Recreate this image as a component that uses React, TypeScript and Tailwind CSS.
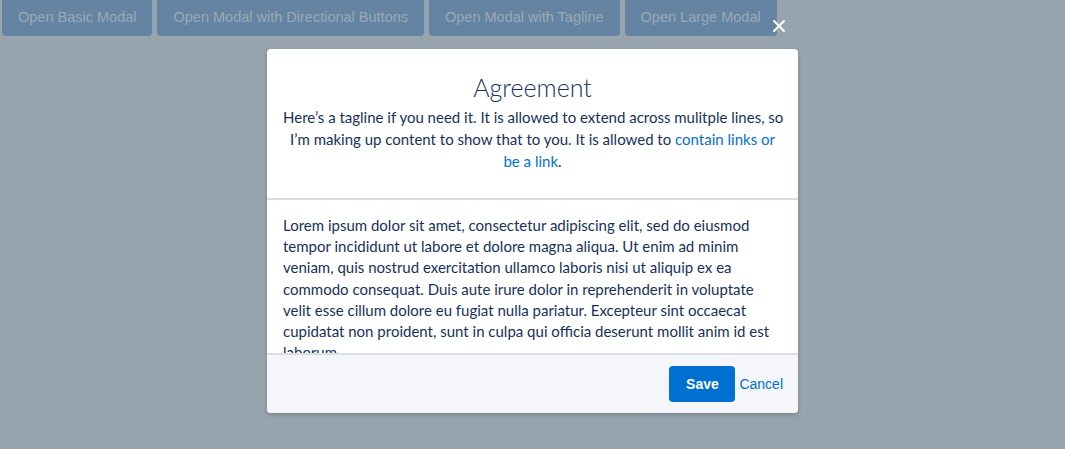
import React from 'react'

const topButtons = [
  'Open Basic Modal',
  'Open Modal with Directional Buttons',
  'Open Modal with Tagline',
  'Open Large Modal',
]

// line breaks as they fall in the design
const bodyLines = [
  'Lorem ipsum dolor sit amet, consectetur adipiscing elit, sed do eiusmod',
  'tempor incididunt ut labore et dolore magna aliqua. Ut enim ad minim',
  'veniam, quis nostrud exercitation ullamco laboris nisi ut aliquip ex ea',
  'commodo consequat. Duis aute irure dolor in reprehenderit in voluptate',
  'velit esse cillum dolore eu fugiat nulla pariatur. Excepteur sint occaecat',
  'cupidatat non proident, sunt in culpa qui officia deserunt mollit anim id est',
  'laborum.',
]

export default function App() {
  return (
    <div className="relative w-full h-[449px] overflow-hidden bg-[#97a3ad]">
      <div className="flex gap-[5px] pl-[2px] font-['Liberation_Sans',Arial,sans-serif]">
        {topButtons.map((label) => (
          <div
            key={label}
            className="h-[36px] px-[16px] flex items-center rounded-b-[4px] bg-[#6584a3] text-[#9aa9b6] text-[14.5px]"
          >
            {label}
          </div>
        ))}
      </div>

      <div className="flex justify-center mt-[13px]">
        <div className="relative w-[531px] rounded-[4px] bg-white shadow-[0_2px_4px_rgba(0,0,0,0.18)] font-['Lato',sans-serif] text-[#16325c]">
          <button className="absolute top-[-30px] right-[12px] w-[14px] h-[14px] flex items-center justify-center">
            <svg width="12" height="12" viewBox="0 0 12 12">
              <path d="M1 1 L11 11 M11 1 L1 11" stroke="white" strokeWidth="2" strokeLinecap="round" />
            </svg>
          </button>

          <div className="px-[16px] pt-[22px] pb-[26px] text-center border-b-2 border-[#d8dde6]">
            <h2 className="text-[25px] leading-[32px] font-light">Agreement</h2>
            <p className="mt-[3px] text-[15px] leading-[22px] whitespace-nowrap">
              Here’s a tagline if you need it. It is allowed to extend across mulitple lines, so
              <br />
              I’m making up content to show that to you. It is allowed to{' '}
              <a className="text-[#0070d2]">
                contain links or
                <br />
                be a link
              </a>
              .
            </p>
          </div>

          <div className="h-[153px] overflow-hidden px-[16px] pt-[15px] text-[15px] leading-[21.2px] whitespace-nowrap">
            {bodyLines.map((line) => (
              <p key={line}>{line}</p>
            ))}
          </div>

          <div className="h-[60px] flex items-center justify-end gap-[4px] pr-[15px] rounded-b-[4px] border-t-2 border-[#d8dde6] bg-[#f4f6f9] font-['Liberation_Sans',Arial,sans-serif] text-[14px]">
            <button className="h-[36px] w-[66px] rounded-[4px] bg-[#0070d2] text-white font-bold">Save</button>
            <button className="text-[#0070d2]">Cancel</button>
          </div>
        </div>
      </div>
    </div>
  )
}
